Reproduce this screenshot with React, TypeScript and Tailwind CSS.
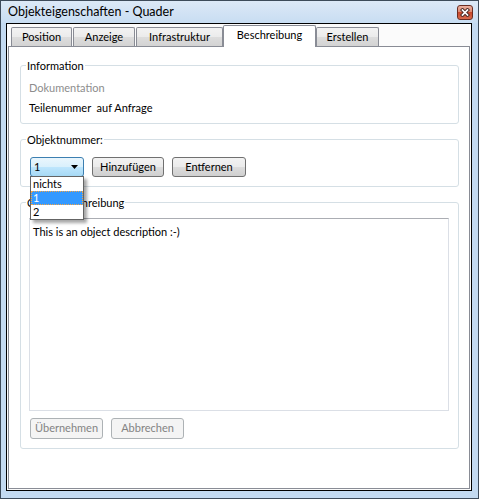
const tabs = [
  { label: "Position", w: "w-[61px]", gap: "ml-[3px]" },
  { label: "Anzeige", w: "w-[62px]", gap: "ml-[1px]" },
  { label: "Infrastruktur", w: "w-[87px]", gap: "ml-[1px]" },
  { label: "Beschreibung", w: "w-[93px]", gap: "", active: true },
  { label: "Erstellen", w: "w-[63px]", gap: "" },
];

function Button({ label, className, disabled }: { label: string; className: string; disabled?: boolean }) {
  return (
    <div
      className={
        "flex items-center justify-center rounded-[3px] border " +
        (disabled
          ? "border-[#adb2b5] bg-[#f4f4f4] text-[#838383] "
          : "border-[#707070] bg-[linear-gradient(#f2f2f2_0%,#ebebeb_50%,#dddddd_50%,#cfcfcf_100%)] text-black ") +
        className
      }
    >
      {label}
    </div>
  );
}

function CloseButton() {
  return (
    <div className="w-[16px] h-[15px] rounded-[3px] border border-[#6b2d22] bg-[linear-gradient(#eab0a0_0%,#dc8a72_45%,#c8472b_50%,#d86a4c_100%)] flex items-center justify-center">
      <svg width="10" height="9" viewBox="0 0 10 9">
        <path d="M2.5 2 L7.5 7 M7.5 2 L2.5 7" stroke="#4a2a24" strokeWidth="3.6" strokeLinecap="square" />
        <path d="M2.5 2 L7.5 7 M7.5 2 L2.5 7" stroke="#ffffff" strokeWidth="1.7" strokeLinecap="square" />
      </svg>
    </div>
  );
}

function ComboBox() {
  return (
    <div className="relative w-[54px] h-[20px]">
      <div className="h-full rounded-[3px] border border-[#3c7fb1] bg-[linear-gradient(#eaf6fd_0%,#d9f0fc_50%,#bee6fd_50%,#a7d9f5_100%)] flex items-center justify-between pl-[3px] pr-[5px]">
        <span>1</span>
        <svg width="7" height="4" viewBox="0 0 7 4">
          <path d="M0 0 H7 L3.5 4 Z" fill="#000" />
        </svg>
      </div>
      {/* open list */}
      <div className="absolute left-0 top-[19px] z-10 w-[54px] border border-[#646464] bg-white shadow-[3px_3px_3px_rgba(0,0,0,0.35)] leading-[14px]">
        <div className="h-[14px] pl-[2px]">nichts</div>
        <div className="h-[14px] pl-[1px] bg-[#3399ff] text-white border border-dotted border-[#f5a442] leading-[12px]">1</div>
        <div className="h-[14px] pl-[2px]">2</div>
      </div>
    </div>
  );
}

export default function App() {
  return (
    <div className="w-[479px] h-[499px] flex flex-col border border-[#3d4b5a] bg-[#c3daf1] font-['Lato',sans-serif] text-[11px] text-black">
      <div className="h-[22px] shrink-0 flex items-center justify-between pl-[7px] pr-[5px] bg-[linear-gradient(#dce9f7,#c8ddf2)]">
        <span className="text-[12.5px] leading-none">Objekteigenschaften - Quader</span>
        <CloseButton />
      </div>

      <div className="flex-1 ml-[5px] mr-[6px] mb-[7px] border border-black bg-[#fbfbfb] flex flex-col px-[1px] pb-[1px]">
        {/* tab strip */}
        <div className="h-[22px] shrink-0 flex items-end">
          {tabs.map((t) =>
            t.active ? (
              <div
                key={t.label}
                className={`${t.w} ${t.gap} relative z-10 -mb-px h-[22px] bg-white border border-b-0 border-[#898c95] rounded-t-[2px] flex items-center justify-center pb-[2px]`}
              >
                {t.label}
              </div>
            ) : (
              <div
                key={t.label}
                className={`${t.w} ${t.gap} h-[19px] border border-b-0 border-[#898c95] rounded-t-[2px] bg-[linear-gradient(#f3f3f3_0%,#ebebeb_50%,#dddddd_50%,#d3d3d3_100%)] flex items-center justify-center`}
              >
                {t.label}
              </div>
            )
          )}
        </div>

        {/* tab panel */}
        <div className="flex-1 border border-[#898c95] bg-white pl-[11px] pr-[10px] pt-[11px]">
          <fieldset className="border border-[#d5dfe5] rounded-[3px]">
            <legend className="ml-[5px] px-[1px] leading-[15px]">Information</legend>
            <div className="pl-[8px] pb-[8px]">
              <div className="pt-[7px] leading-[15px] text-[#8d8d8d]">Dokumentation</div>
              <div className="mt-[5px] leading-[15px]">Teilenummer&nbsp; auf Anfrage</div>
            </div>
          </fieldset>

          <fieldset className="mt-[8px] border border-[#d5dfe5] rounded-[3px]">
            <legend className="ml-[5px] px-[1px] leading-[15px]">Objektnummer:</legend>
            <div className="pl-[9px] pb-[9px] pt-[10px] flex gap-[8px] relative z-10">
              <ComboBox />
              <Button label="Hinzufügen" className="w-[72px] h-[20px]" />
              <Button label="Entfernen" className="w-[74px] h-[20px]" />
            </div>
          </fieldset>

          <fieldset className="mt-[8px] border border-[#d5dfe5] rounded-[3px]">
            <legend className="ml-[5px] px-[1px] leading-[15px]">Objektbeschreibung</legend>
            <div className="pl-[8px] pr-[9px] pb-[9px]">
              <div className="mt-[8px] h-[193px] border border-[#dbdfe6] border-t-[#abadb3] px-[3px] pt-[5px] leading-[15px]">
                This is an object description :-)
              </div>
              <div className="mt-[7px] ml-[1px] flex gap-[8px]">
                <Button label="Übernehmen" className="w-[73px] h-[21px]" disabled />
                <Button label="Abbrechen" className="w-[73px] h-[21px]" disabled />
              </div>
            </div>
          </fieldset>
        </div>
      </div>
    </div>
  );
}
